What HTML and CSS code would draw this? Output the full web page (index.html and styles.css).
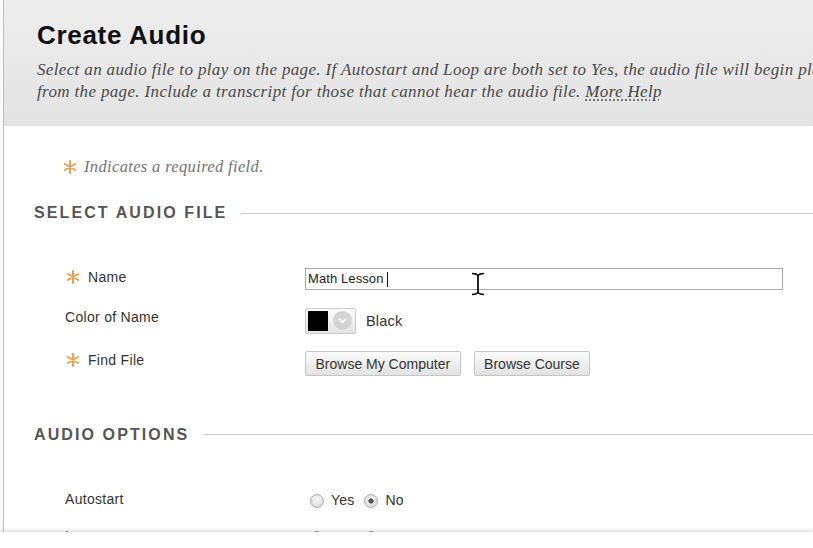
FILE: index.html
```html
<!DOCTYPE html>
<html lang="en">
<head>
<meta charset="utf-8">
<title>Create Audio</title>
<link rel="stylesheet" href="styles.css">
</head>
<body>
<div class="screen">
  <div class="page">
    <header class="page-header">
      <h1 class="page-title">Create Audio</h1>
      <p class="intro">
        <span class="intro-line">Select an audio file to play on the page. If Autostart and Loop are both set to Yes, the audio file will begin playing when the page loads and will continue until users navigate away</span>
        <span class="intro-line">from the page. Include a transcript for those that cannot hear the audio file. <a href="#" class="help">More Help</a></span>
      </p>
    </header>

    <main class="content">
      <p class="legend">
        <svg class="req" viewBox="0 0 16 14" aria-hidden="true"><path d="M8 1V13M2.8 4L13.2 10M2.8 10L13.2 4"/></svg>
        <span>Indicates a required field.</span>
      </p>

      <section class="step">
        <h2 class="step-title">Select Audio File</h2>
        <div class="fields">
          <div class="field">
            <div class="field-label">
              <svg class="req" viewBox="0 0 16 14" aria-hidden="true"><path d="M8 1V13M2.8 4L13.2 10M2.8 10L13.2 4"/></svg>
              <span>Name</span>
            </div>
            <div class="field-control">
              <div class="text-input"><span class="value">Math Lesson </span><span class="caret"></span></div>
            </div>
          </div>
          <div class="field">
            <div class="field-label"><span>Color of Name</span></div>
            <div class="field-control">
              <div class="color-picker">
                <span class="swatch"></span>
                <span class="picker-arrow">
                  <svg viewBox="0 0 19 19" aria-hidden="true"><path d="M6.3 8.2L9.5 11.2L12.7 8.2"/></svg>
                </span>
              </div>
              <span class="color-name">Black</span>
            </div>
          </div>
          <div class="field">
            <div class="field-label">
              <svg class="req" viewBox="0 0 16 14" aria-hidden="true"><path d="M8 1V13M2.8 4L13.2 10M2.8 10L13.2 4"/></svg>
              <span>Find File</span>
            </div>
            <div class="field-control buttons">
              <button class="btn" type="button">Browse My Computer</button>
              <button class="btn" type="button">Browse Course</button>
            </div>
          </div>
        </div>
      </section>

      <section class="step">
        <h2 class="step-title">Audio Options</h2>
        <div class="fields">
          <div class="field">
            <div class="field-label"><span>Autostart</span></div>
            <div class="field-control radios">
              <label class="radio"><input type="radio" name="autostart"><span>Yes</span></label>
              <label class="radio"><input type="radio" name="autostart" checked><span>No</span></label>
            </div>
          </div>
          <div class="field">
            <div class="field-label"><span>Loop</span></div>
            <div class="field-control radios">
              <label class="radio"><input type="radio" name="loop"><span>Yes</span></label>
              <label class="radio"><input type="radio" name="loop" checked><span>No</span></label>
            </div>
          </div>
        </div>
      </section>
    </main>
  </div>

  <svg class="ibeam" viewBox="0 0 14 24" aria-hidden="true">
    <path d="M1 1.5Q5.6 1.5 7 3.6Q8.4 1.5 13 1.5M7 3.6V20.4M1 22.5Q5.6 22.5 7 20.4Q8.4 22.5 13 22.5"/>
  </svg>
  <div class="player-bar"></div>
</div>
</body>
</html>
```

FILE: styles.css
```css
* { box-sizing: border-box; }

html, body { margin: 0; padding: 0; }

body {
  background: #fafafa;
  font-family: "Liberation Sans", Arial, sans-serif;
  color: #333;
}

.screen {
  position: relative;
  width: 813px;
  height: 548px;
  overflow: hidden;
}

.page {
  margin-left: 3px;
  border-left: 1px solid #bdbdbd;
  background: #fff;
  min-height: 548px;
}

/* ---------- header ---------- */
.page-header {
  height: 126px;
  padding: 20px 0 0 33px;
  background: linear-gradient(#eeeeee, #e3e3e3);
  overflow: hidden;
  white-space: nowrap;
}

.page-title {
  margin: 0;
  font-size: 26px;
  line-height: 30px;
  font-weight: bold;
  letter-spacing: 0.7px;
  color: #111;
}

.intro {
  margin: 9px 0 0;
  font-family: "Liberation Serif", "Times New Roman", serif;
  font-style: italic;
  font-size: 17px;
  line-height: 22px;
  letter-spacing: 0.35px;
  color: #4a4a4a;
}

.intro-line { display: block; }

.help {
  color: #444;
  text-decoration: underline dotted #666;
  text-underline-offset: 3px;
}

/* ---------- content ---------- */
.content { padding-top: 31px; }

.req {
  flex: none;
  width: 16px;
  height: 14px;
  fill: none;
  stroke: #e8a050;
  stroke-width: 2;
  stroke-linecap: round;
}

.legend {
  margin: 0;
  padding-left: 58px;
  height: 20px;
  display: flex;
  align-items: center;
  font-family: "Liberation Serif", "Times New Roman", serif;
  font-style: italic;
  font-size: 16.5px;
  letter-spacing: 0.35px;
  color: #737373;
}

.legend .req { margin-right: 6px; }

.step + .step { margin-top: 48.5px; }

.step-title {
  margin: 26px 0 0;
  padding-left: 30px;
  display: flex;
  align-items: center;
  font-size: 16px;
  line-height: 20px;
  font-weight: bold;
  letter-spacing: 2.1px;
  text-transform: uppercase;
  color: #555;
}

.step + .step .step-title { margin-top: 0; }

.step-title::after {
  content: "";
  flex: 1;
  height: 1px;
  margin-left: 14px;
  background: #cacaca;
}

.fields {
  margin-top: 45px;
  padding-left: 61px;
  display: flex;
  flex-direction: column;
  gap: 17.5px;
}

.field {
  display: flex;
  align-items: flex-start;
}

.field-label {
  flex: none;
  width: 240px;
  display: flex;
  align-items: center;
  font-size: 14px;
  line-height: 18px;
  letter-spacing: 0.3px;
  color: #333;
}

.field-label .req { margin-right: 7px; }

.field-control {
  display: flex;
  align-items: center;
}

/* text input */
.text-input {
  width: 478px;
  height: 22px;
  padding: 0 2px;
  display: flex;
  align-items: center;
  border: 1px solid #a9a9a9;
  background: #fff;
  font-size: 13px;
  line-height: 20px;
  letter-spacing: 0.1px;
  color: #222;
}

.text-input .value { white-space: pre; }

.caret {
  display: inline-block;
  width: 1px;
  height: 15px;
  background: #111;
}

/* color picker */
.color-picker {
  width: 51px;
  height: 26px;
  padding-left: 2px;
  display: flex;
  align-items: center;
  gap: 5px;
  border: 1px solid #cbcbcb;
  border-radius: 2px;
  background: linear-gradient(#fbfbfb, #e4e4e4);
}

.swatch {
  width: 20px;
  height: 20px;
  background: #000;
}

.picker-arrow {
  width: 19px;
  height: 19px;
  border-radius: 50%;
  background: #d3d3d3;
}

.picker-arrow svg {
  display: block;
  width: 19px;
  height: 19px;
  fill: none;
  stroke: #fff;
  stroke-width: 1.8;
  stroke-linecap: round;
  stroke-linejoin: round;
}

.color-name {
  margin-left: 10px;
  font-size: 14.5px;
  letter-spacing: 0.2px;
  color: #333;
}

/* buttons */
.buttons { gap: 13px; }

.btn {
  height: 25px;
  padding: 0 9.5px;
  border: 1px solid #c5c5c5;
  border-radius: 2px;
  background: linear-gradient(#fbfbfb, #e2e2e2);
  font-family: "Liberation Sans", Arial, sans-serif;
  font-size: 14px;
  color: #333;
}

/* radios */
.radios { height: 20px; }

.radio {
  display: flex;
  align-items: center;
  font-size: 14px;
  letter-spacing: 0.2px;
  color: #333;
}

.radio + .radio { margin-left: 10px; }

.radio input {
  appearance: none;
  -webkit-appearance: none;
  width: 14px;
  height: 14px;
  margin: 2px 7px 0 5px;
  border: 1px solid #a8a8a8;
  border-radius: 50%;
  background: radial-gradient(circle at 50% 35%, #f7f7f7, #d4d4d4);
}

.radio + .radio input { margin-left: 0; }

.radio input:checked {
  background:
    radial-gradient(circle, #555 0 2.3px, transparent 2.9px),
    radial-gradient(circle at 50% 35%, #f7f7f7, #d4d4d4);
}

/* overlays */
.ibeam {
  position: absolute;
  left: 471px;
  top: 272px;
  width: 14px;
  height: 24px;
  fill: none;
  stroke: #000;
  stroke-width: 1.7;
}

.player-bar {
  position: absolute;
  left: 0;
  right: 0;
  top: 532px;
  bottom: 0;
  background: #fff;
  box-shadow: 0 -1px 4px rgba(0, 0, 0, 0.18);
}
```
